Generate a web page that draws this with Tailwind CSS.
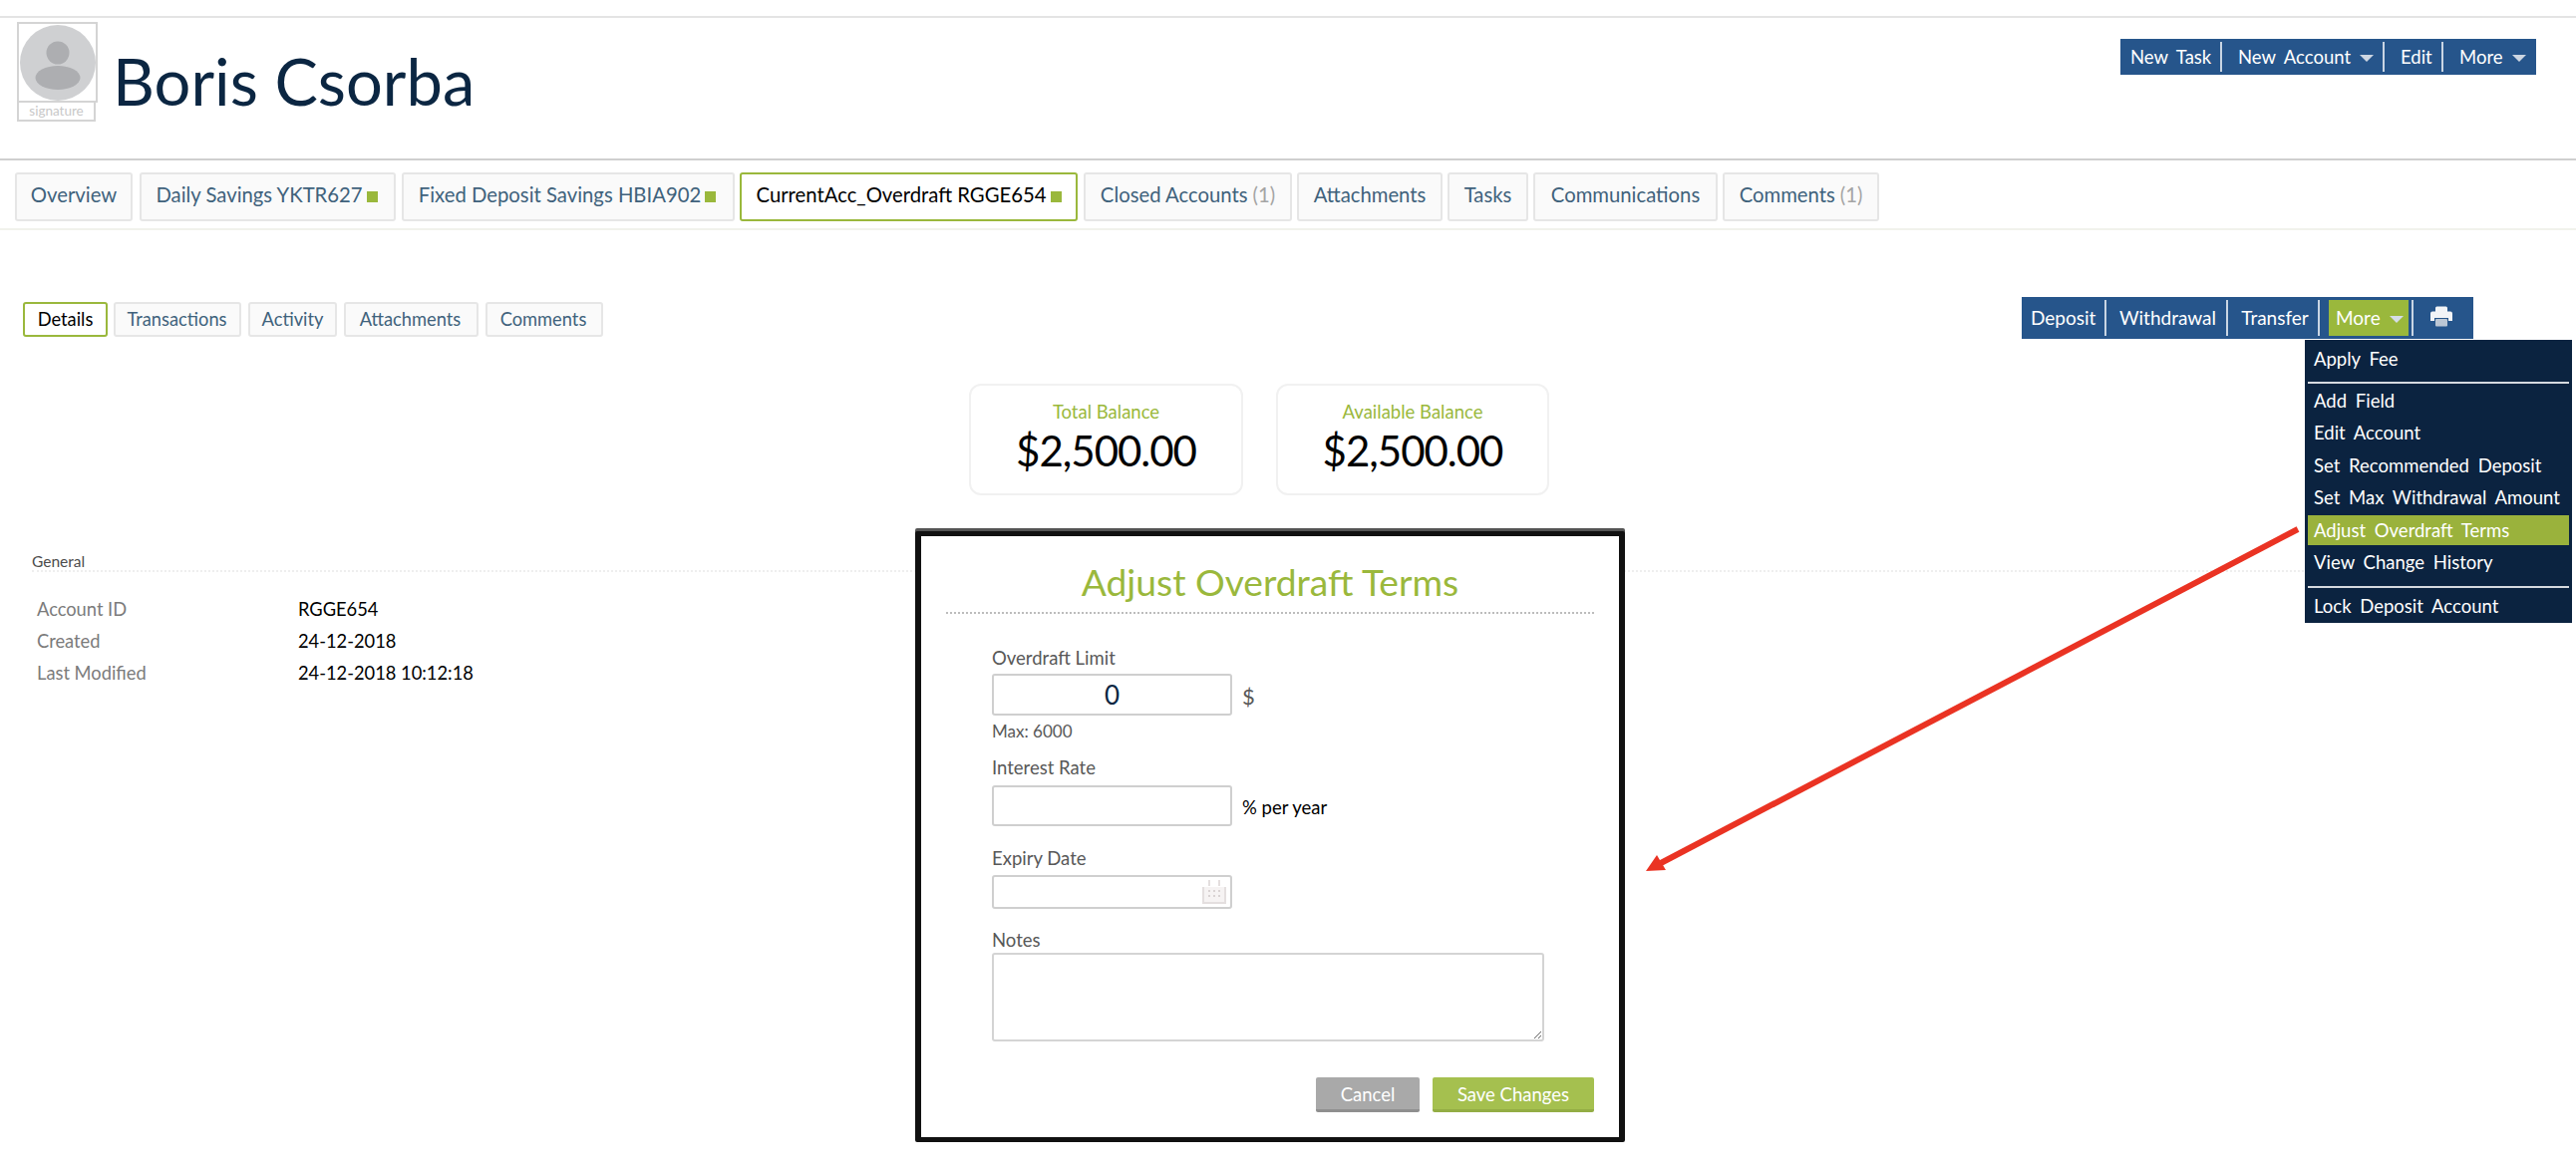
<!DOCTYPE html>
<html lang="en">
<head>
  <meta charset="UTF-8">
  <title>Boris Csorba</title>
  <script src="https://cdn.jsdelivr.net/npm/@tailwindcss/browser@4"></script>
</head>
<body class="bg-white font-['Lato',sans-serif] text-black">
<div class="relative w-[2584px] h-[1180px] overflow-hidden">

  <!-- client header -->
  <div class="mt-[16px] h-[145px] border-t-2 border-b-2 border-t-[#e4e4e4] border-b-[#cfcfcf] flex justify-between items-start pl-[17px] pr-[40px]">
    <div class="flex items-start pt-[4px]">
      <div class="w-[81px]">
        <div class="w-[81px] h-[81px] border-2 border-[#d4d4d4] flex items-center justify-center">
          <svg width="76" height="76" viewBox="0 0 76 76">
            <circle cx="38" cy="38" r="38" fill="#cfd0d2"/>
            <circle cx="38" cy="28" r="11.5" fill="#adaeb1"/>
            <ellipse cx="38" cy="53" rx="22.5" ry="12" fill="#adaeb1"/>
          </svg>
        </div>
        <div class="w-[79px] h-[19px] border-2 border-t-0 border-[#d4d4d4] text-[13.5px] leading-[16px] text-center text-[#c8c8c8]">signature</div>
      </div>
      <h1 class="ml-[15px] mt-[21px] text-[65px] leading-[76px] text-[#0b2642]">Boris Csorba</h1>
    </div>
    <div class="mt-[21px] w-[417px] h-[36px] bg-[#26558b] flex items-center text-white text-[18.5px] [word-spacing:4px]">
      <a class="w-[102px] pl-[10px] leading-[30px] border-r-2 border-[#c9d5e3]">New Task</a>
      <a class="w-[163px] pl-[16px] leading-[30px] border-r-2 border-[#c9d5e3] flex items-center">New Account<span class="ml-[9px] mt-[2px] w-0 h-0 border-x-[7px] border-x-transparent border-t-[7px] border-t-[#cdd6e2]"></span></a>
      <a class="w-[59px] pl-[16px] leading-[30px] border-r-2 border-[#c9d5e3]">Edit</a>
      <a class="pl-[16px] leading-[30px] flex items-center">More<span class="ml-[9px] mt-[2px] w-0 h-0 border-x-[7px] border-x-transparent border-t-[7px] border-t-[#cdd6e2]"></span></a>
    </div>
  </div>

  <!-- main tabs -->
  <div class="h-[70px] pt-[12px] pl-[15px] border-b-2 border-[#f1f2ec] flex gap-[5px] text-[20.3px] text-[#40627c]">
    <a class="w-[118px] h-[49px] pb-[5px] flex items-center justify-center bg-[#fafafa] border-2 border-[#e6e6e6] rounded-[3px]">Overview</a>
    <a class="ml-[2px] w-[257px] h-[49px] pb-[5px] pr-[2px] flex items-center justify-center bg-[#fafafa] border-2 border-[#e6e6e6] rounded-[3px]">Daily Savings YKTR627<span class="ml-[4px] mt-[5px] w-[11px] h-[11px] bg-[#9ab83c]"></span></a>
    <a class="ml-[1px] w-[334px] h-[49px] pb-[5px] pr-[2px] flex items-center justify-center bg-[#fafafa] border-2 border-[#e6e6e6] rounded-[3px]">Fixed Deposit Savings HBIA902<span class="ml-[4px] mt-[5px] w-[11px] h-[11px] bg-[#9ab83c]"></span></a>
    <a class="w-[339px] h-[49px] pb-[5px] flex items-center justify-center bg-white border-2 border-[#9ab83c] rounded-[3px] text-black">CurrentAcc_Overdraft RGGE654<span class="ml-[4px] mt-[5px] w-[11px] h-[11px] bg-[#9ab83c]"></span></a>
    <a class="ml-[1px] w-[209px] h-[49px] pb-[5px] flex items-center justify-center bg-[#fafafa] border-2 border-[#e6e6e6] rounded-[3px]">Closed Accounts<span class="ml-[5px] text-[#a5a5a5]">(1)</span></a>
    <a class="w-[146px] h-[49px] pb-[5px] flex items-center justify-center bg-[#fafafa] border-2 border-[#e6e6e6] rounded-[3px]">Attachments</a>
    <a class="w-[81px] h-[49px] pb-[5px] flex items-center justify-center bg-[#fafafa] border-2 border-[#e6e6e6] rounded-[3px]">Tasks</a>
    <a class="w-[185px] h-[49px] pb-[5px] flex items-center justify-center bg-[#fafafa] border-2 border-[#e6e6e6] rounded-[3px]">Communications</a>
    <a class="w-[157px] h-[49px] pb-[5px] flex items-center justify-center bg-[#fafafa] border-2 border-[#e6e6e6] rounded-[3px]">Comments<span class="ml-[5px] text-[#a5a5a5]">(1)</span></a>
  </div>

  <!-- account tabs and actions -->
  <div class="mt-[67px] pl-[23px] pr-[103px] flex justify-between items-start">
    <div class="mt-[5px] flex gap-[7px] text-[18.3px] text-[#40627c]">
      <a class="w-[85px] h-[35px] flex items-center justify-center bg-white border-2 border-[#9ab83c] rounded-[3px] text-black">Details</a>
      <a class="-ml-[1px] w-[128px] h-[35px] pr-[1px] flex items-center justify-center bg-[#fafafa] border-2 border-[#e6e6e6] rounded-[3px]">Transactions</a>
      <a class="w-[89px] h-[35px] flex items-center justify-center bg-[#fafafa] border-2 border-[#e6e6e6] rounded-[3px]">Activity</a>
      <a class="w-[135px] h-[35px] pr-[2px] flex items-center justify-center bg-[#fafafa] border-2 border-[#e6e6e6] rounded-[3px]">Attachments</a>
      <a class="w-[118px] h-[35px] pr-[2px] flex items-center justify-center bg-[#fafafa] border-2 border-[#e6e6e6] rounded-[3px]">Comments</a>
    </div>
    <div class="h-[42px] w-[453px] bg-[#26558b] flex items-center text-white text-[19px]">
      <a class="w-[85px] pl-[9px] leading-[36px] border-r-2 border-[#c9d5e3]">Deposit</a>
      <a class="w-[122px] pl-[3px] text-center leading-[36px] border-r-2 border-[#c9d5e3]">Withdrawal</a>
      <a class="w-[92px] pl-[4px] text-center leading-[36px] border-r-2 border-[#c9d5e3]">Transfer</a>
      <a class="ml-[9px] w-[80px] h-[36px] pl-[7px] bg-[#9ab83c] flex items-center">More<span class="ml-[9px] mt-[3px] w-0 h-0 border-x-[7px] border-x-transparent border-t-[7px] border-t-[#d5dde8]"></span></a>
      <span class="ml-[3px] h-[36px] w-[2px] bg-[#c9d5e3]"></span>
      <span class="ml-[17px] mb-[3px]">
        <svg width="22" height="21" viewBox="0 0 22 21" class="block">
          <path d="M5 6V2a1.500 1.500 0 0 1 1.500-1.500h9A1.500 1.500 0 0 1 17 2v4z" fill="#f2f4f7"/>
          <path d="M2 5.500h18a2 2 0 0 1 2 2V15h-4v-3H4v3H0V7.500a2 2 0 0 1 2-2z" fill="#f2f4f7"/>
          <rect x="5" y="13" width="12" height="7.500" rx="1" fill="#bcc7d4"/>
        </svg>
      </span>
    </div>
  </div>

  <!-- balance cards -->
  <div class="mt-[45px] ml-[972px] flex gap-[33px]">
    <div class="w-[275px] h-[112px] border-2 border-[#f1f1f1] rounded-[12px] text-center pt-[14px]">
      <div class="text-[18.5px] leading-[24px] text-[#9ab83c]">Total Balance</div>
      <div class="text-[42px] tracking-[-1px] leading-[54px]">$2,500.00</div>
    </div>
    <div class="w-[274px] h-[112px] border-2 border-[#f1f1f1] rounded-[12px] text-center pt-[14px]">
      <div class="text-[18.5px] leading-[24px] text-[#9ab83c]">Available Balance</div>
      <div class="text-[42px] tracking-[-1px] leading-[54px]">$2,500.00</div>
    </div>
  </div>

  <!-- general section -->
  <div class="mt-[55px] ml-[32px] mr-[5px]">
    <div class="text-[15.5px] leading-[22px] text-[#4d4d4d] border-b-2 border-dotted border-[#eeeeee] h-[22px]">General</div>
    <div class="mt-[22px] ml-[5px] grid grid-cols-[262px_1fr] auto-rows-[32px] items-center text-[18.3px]">
      <div class="text-[#7b7b7b]">Account ID</div><div>RGGE654</div>
      <div class="text-[#7b7b7b]">Created</div><div>24-12-2018</div>
      <div class="text-[#7b7b7b]">Last Modified</div><div>24-12-2018 10:12:18</div>
    </div>
  </div>

  <!-- more menu -->
  <div class="absolute left-[2312px] top-[341px] w-[268px] h-[284px] bg-[#0b2340] px-[3px] text-white text-[18.5px] leading-[32.4px] [word-spacing:4px]">
    <div class="pl-[6px] h-[42px] leading-[38px]">Apply Fee</div>
    <div class="h-[2px] bg-[#d5d9df]"></div>
    <div class="pl-[6px] mt-[1px]">Add Field</div>
    <div class="pl-[6px]">Edit Account</div>
    <div class="pl-[6px]">Set Recommended Deposit</div>
    <div class="pl-[6px] whitespace-nowrap">Set Max Withdrawal Amount</div>
    <div class="pl-[6px] my-[1.2px] leading-[30px] bg-[#9ab23c]">Adjust Overdraft Terms</div>
    <div class="pl-[6px]">View Change History</div>
    <div class="h-[2px] mt-[8px] bg-[#d5d9df]"></div>
    <div class="pl-[6px] mt-[2px]">Lock Deposit Account</div>
  </div>

  <!-- red arrow annotation -->
  <svg class="absolute left-0 top-0 pointer-events-none" width="2584" height="1180" viewBox="0 0 2584 1180">
    <line x1="2305" y1="531" x2="1666" y2="866" stroke="#ea3323" stroke-width="6"/>
    <polygon points="1651,874 1662,858 1671,873" fill="#ea3323"/>
  </svg>

  <!-- adjust overdraft dialog -->
  <div class="absolute left-[918px] top-[533px] w-[712px] h-[613px] bg-white border-x-[6px] border-b-[5px] border-t-[5px] border-[#111111] rounded-[2px] shadow-[0_-3px_0_#555555]">
    <div class="mx-[25px] h-[78px] border-b-2 border-dotted border-[#bcbcbc] text-center text-[37.2px] leading-[50px] pt-[21px] text-[#9ab83c]">Adjust Overdraft Terms</div>
    <div class="ml-[71px] text-[#585858] text-[18.5px]">
      <label class="block mt-[32px] leading-[24px]">Overdraft Limit</label>
      <div class="mt-[4px] flex items-center">
        <input value="0" class="w-[241px] h-[42px] border-2 border-[#cfcfcf] rounded-[3px] text-center text-[26px] text-[#0b2642]">
        <span class="ml-[10px] mt-[2px] text-[22px]">$</span>
      </div>
      <div class="mt-[5px] text-[17px] leading-[22px]">Max: 6000</div>
      <label class="block mt-[13px] leading-[24px]">Interest Rate</label>
      <div class="mt-[6px] flex items-center">
        <input class="w-[241px] h-[41px] border-2 border-[#cfcfcf] rounded-[3px]">
        <span class="ml-[10px] mt-[5px] text-black">% per year</span>
      </div>
      <label class="block mt-[20px] leading-[24px]">Expiry Date</label>
      <div class="mt-[5px] w-[241px] h-[34px] border-2 border-[#cfcfcf] rounded-[3px] flex items-center justify-end pr-[3px]">
        <svg width="26" height="26" viewBox="0 0 26 26" class="block">
          <path d="M3 8h20v15H3z" fill="#f6f3f3"/>
          <path d="M1 8h2v15h20V8h2v17H1z" fill="#e4dfdf"/>
          <rect x="7" y="1" width="2" height="6" fill="#e4dfdf"/>
          <rect x="17" y="1" width="2" height="6" fill="#e4dfdf"/>
          <path d="M7 11h2v2H7zM12 11h2v2h-2zM17 11h2v2h-2zM7 16h2v2H7zM12 16h2v2h-2zM17 16h2v2h-2z" fill="#d9d3d3"/>
        </svg>
      </div>
      <label class="block mt-[19px] leading-[24px]">Notes</label>
      <textarea class="mt-[1px] block w-[554px] h-[89px] border-2 border-[#d4d4d4] rounded-[3px]"></textarea>
    </div>
    <div class="absolute right-[25px] bottom-[25px] flex gap-[13px] text-white text-[18.5px]">
      <button class="w-[104px] h-[35px] pt-[3px] bg-[#a9a9a9] border-b-[3px] border-[#8f8f8f] rounded-[2px]">Cancel</button>
      <button class="w-[162px] h-[35px] pt-[3px] bg-[#a5c04f] border-b-[3px] border-[#93ad44] rounded-[2px]">Save Changes</button>
    </div>
  </div>

</div>
</body>
</html>
